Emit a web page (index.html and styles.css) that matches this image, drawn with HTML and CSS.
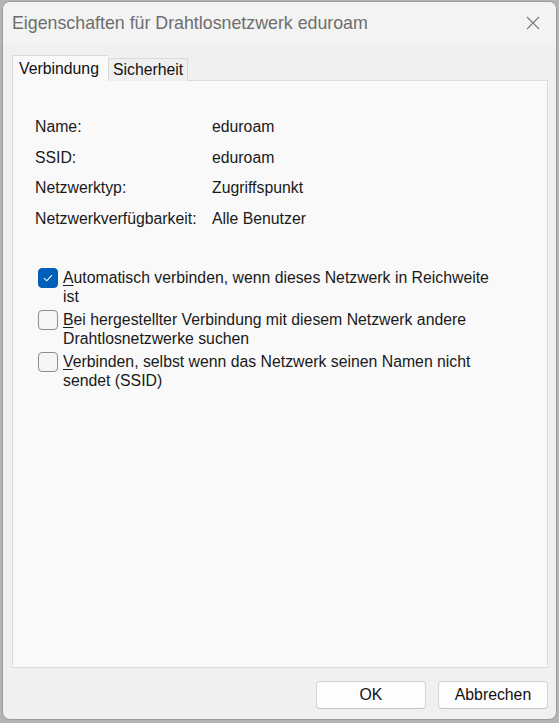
FILE: index.html
```html
<!DOCTYPE html>
<html lang="de">
<head>
    <meta charset="UTF-8">
    <title>Eigenschaften für Drahtlosnetzwerk eduroam</title>
    <link rel="stylesheet" href="styles.css">
</head>
<body>
    <div class="window">
        <div class="title-bar">
            <span class="title">Eigenschaften für Drahtlosnetzwerk eduroam</span>
            <button class="close-btn" aria-label="Schließen">
                <svg width="14" height="14" viewBox="0 0 14 14">
                    <path d="M1 1 L13 13 M13 1 L1 13" stroke="#7a7a7a" stroke-width="1.1" fill="none"/>
                </svg>
            </button>
        </div>

        <div class="dialog-body">
            <div class="tabs">
                <div class="tab active">Verbindung</div>
                <div class="tab">Sicherheit</div>
            </div>

            <div class="tab-panel">
                <div class="info-grid">
                    <div>Name:</div>
                    <div>eduroam</div>
                    <div>SSID:</div>
                    <div>eduroam</div>
                    <div>Netzwerktyp:</div>
                    <div>Zugriffspunkt</div>
                    <div>Netzwerkverfügbarkeit:</div>
                    <div>Alle Benutzer</div>
                </div>

                <div class="options">
                    <label class="option">
                        <span class="checkbox checked">
                            <svg width="10" height="8" viewBox="0 0 10 8">
                                <path d="M1 4.2 L3.7 6.8 L9 1.2" stroke="#fff" stroke-width="1.1" fill="none"/>
                            </svg>
                        </span>
                        <span class="option-text"><u>A</u>utomatisch verbinden, wenn dieses Netzwerk in Reichweite<br>ist</span>
                    </label>
                    <label class="option">
                        <span class="checkbox"></span>
                        <span class="option-text"><u>B</u>ei hergestellter Verbindung mit diesem Netzwerk andere<br>Drahtlosnetzwerke suchen</span>
                    </label>
                    <label class="option">
                        <span class="checkbox"></span>
                        <span class="option-text"><u>V</u>erbinden, selbst wenn das Netzwerk seinen Namen nicht<br>sendet (SSID)</span>
                    </label>
                </div>
            </div>

            <div class="footer">
                <button class="btn">OK</button>
                <button class="btn">Abbrechen</button>
            </div>
        </div>
    </div>
</body>
</html>
```

FILE: styles.css
```css
* {
    margin: 0;
    padding: 0;
    box-sizing: border-box;
}

body {
    font-family: "Liberation Sans", Arial, sans-serif;
    font-size: 15.8px;
    color: #1a1a1a;
    background-color: #b4b4b4;
    width: 559px;
    height: 723px;
    overflow: hidden;
}

.window {
    margin: 1px 0 0 2px;
    width: 555px;
    height: 719px;
    border: 1px solid #9c9c9c;
    border-radius: 8px;
    background-color: #f0f0f0;
    overflow: hidden;
    display: flex;
    flex-direction: column;
}

.title-bar {
    height: 42px;
    flex-shrink: 0;
    background-color: #f3f3f3;
    display: flex;
    align-items: center;
    justify-content: space-between;
    padding: 0 8px 0 9px;
}

.title {
    color: #6e6e6e;
    font-size: 17.8px;
}

.close-btn {
    border: none;
    background: none;
    width: 30px;
    height: 30px;
    display: flex;
    align-items: center;
    justify-content: center;
}

.dialog-body {
    flex: 1;
    display: flex;
    flex-direction: column;
    padding: 11px 8px 0 9px;
}

.tabs {
    display: flex;
    align-items: flex-end;
    height: 26px;
    position: relative;
    z-index: 1;
}

.tab {
    height: 23px;
    padding: 0 4px 0 4px;
    border: 1px solid #d9d9d9;
    border-bottom: none;
    background-color: #f0f0f0;
    line-height: 22px;
    color: #111;
}

.tab.active {
    height: 26px;
    padding: 0 9px 0 6px;
    background-color: #f9f9f9;
    line-height: 26px;
    border-right: none;
}

.tab-panel {
    height: 588px;
    margin-top: -1px;
    border: 1px solid #dcdcdc;
    background-color: #f9f9f9;
    padding: 31px 22px 0 22px;
}

.info-grid {
    display: grid;
    grid-template-columns: 177px 1fr;
    grid-auto-rows: 30.5px;
    line-height: 30px;
}

.options {
    margin-top: 34px;
    display: flex;
    flex-direction: column;
    gap: 4px;
}

.option {
    display: flex;
    align-items: flex-start;
    gap: 5px;
    padding-left: 3px;
    line-height: 19px;
}

.checkbox {
    width: 20px;
    height: 20px;
    flex-shrink: 0;
    border: 1px solid #8c8c8c;
    border-radius: 4px;
    background-color: #f6f6f6;
    display: flex;
    align-items: center;
    justify-content: center;
}

.checkbox.checked {
    border-color: #005fb8;
    background-color: #005fb8;
}

.option-text u {
    text-decoration-thickness: 1px;
    text-underline-offset: 2px;
}

.footer {
    flex: 1;
    display: flex;
    justify-content: flex-end;
    align-items: flex-start;
    gap: 12px;
    padding-top: 13px;
}

.btn {
    width: 110px;
    height: 28px;
    font-family: inherit;
    font-size: 15.8px;
    color: #111;
    background-color: #fdfdfd;
    border: 1px solid #d3d3d3;
    border-bottom-color: #c4c4c4;
    border-radius: 4px;
}
```
